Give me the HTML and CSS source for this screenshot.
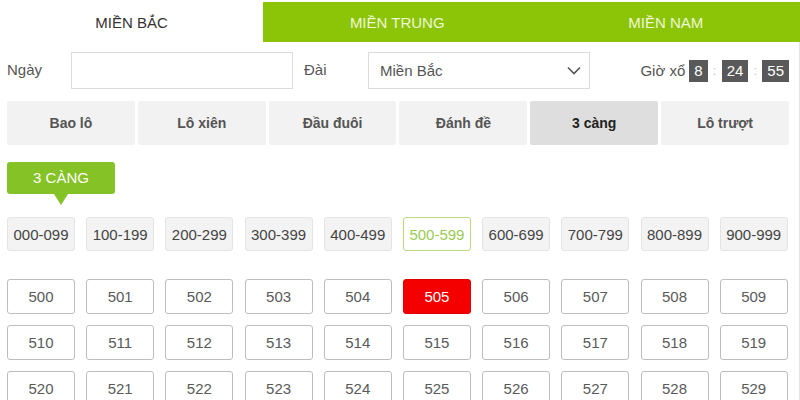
FILE: index.html
```html
<!DOCTYPE html>
<html lang="vi">
<head>
  <meta charset="UTF-8">
  <meta name="viewport" content="width=device-width, initial-scale=1.0">
  <title>3 Càng</title>
  <link rel="stylesheet" href="styles.css">
</head>
<body>
  <div class="tabs">
    <div class="tab active">MIỀN BẮC</div>
    <div class="tab">MIỀN TRUNG</div>
    <div class="tab">MIỀN NAM</div>
  </div>

  <div class="panel">
    <div class="filters">
      <label class="lbl">Ngày</label>
      <input class="field date" type="text">
      <label class="lbl dai">Đài</label>
      <div class="field select">
        <span>Miền Bắc</span>
        <svg width="14" height="9" viewBox="0 0 14 9"><path d="M1 1.5 L7 7.5 L13 1.5" fill="none" stroke="#555" stroke-width="1.6"/></svg>
      </div>
      <div class="clock">
        <span class="clock-lbl">Giờ xổ</span>
        <span class="digit">8</span><span class="sep">:</span>
        <span class="digit">24</span><span class="sep">:</span>
        <span class="digit">55</span>
      </div>
    </div>

    <div class="types">
      <button class="type">Bao lô</button>
      <button class="type">Lô xiên</button>
      <button class="type">Đầu đuôi</button>
      <button class="type">Đánh đề</button>
      <button class="type active">3 càng</button>
      <button class="type">Lô trượt</button>
    </div>

    <div class="badge">3 CÀNG</div>

    <div class="ranges">
      <button class="range">000-099</button>
      <button class="range">100-199</button>
      <button class="range">200-299</button>
      <button class="range">300-399</button>
      <button class="range">400-499</button>
      <button class="range active">500-599</button>
      <button class="range">600-699</button>
      <button class="range">700-799</button>
      <button class="range">800-899</button>
      <button class="range">900-999</button>
    </div>

    <div class="numbers" id="numbers"></div>
  </div>

  <script>
    const numbers = document.getElementById("numbers");
    for (let i = 500; i < 530; i++) {
      const btn = document.createElement("button");
      btn.className = "num" + (i === 505 ? " picked" : "");
      btn.textContent = i;
      numbers.appendChild(btn);
    }
  </script>
</body>
</html>
```

FILE: styles.css
```css
body {
  margin: 0;
  font-family: "Liberation Sans", Arial, sans-serif;
  color: #444;
  background: #fff;
  width: 800px;
  height: 400px;
  overflow: hidden;
}
.tabs {
  display: flex;
  margin-top: 2px;
  height: 40px;
}
.tab {
  flex: 1;
  display: flex;
  align-items: center;
  justify-content: center;
  background: #8cc408;
  color: #eef7d6;
  font-size: 15px;
}
.tab.active {
  flex: 0 0 263px;
  background: #fff;
  color: #333;
}
.panel {
  box-sizing: border-box;
  border-right: 1px solid #e4e4e4;
  padding: 10px 10px 0 7px;
  height: 358px;
  overflow: hidden;
}
.filters {
  display: flex;
  align-items: center;
  height: 37px;
}
.lbl {
  font-size: 15px;
  color: #555;
  width: 64px;
  margin-top: -2px;
}
.lbl.dai {
  width: 64px;
  margin-left: 11px;
}
.field {
  box-sizing: border-box;
  height: 37px;
  border: 1px solid #dcdcdc;
  background: #fff;
}
.date {
  width: 222px;
}
.select {
  width: 222px;
  display: flex;
  align-items: center;
  justify-content: space-between;
  padding: 0 8px 0 11px;
  font-size: 15px;
  color: #555;
}
.clock {
  margin-left: auto;
  display: flex;
  align-items: center;
  font-size: 15px;
  color: #555;
}
.clock-lbl {
  margin-right: 4px;
}
.digit {
  background: #595959;
  color: #fff;
  height: 22px;
  line-height: 22px;
  padding: 0 5px;
  font-size: 15px;
}
.sep {
  color: #c4c4c4;
  font-size: 13px;
  width: 14px;
  text-align: center;
}
.types {
  display: flex;
  gap: 3px;
  margin-top: 12px;
}
.type {
  flex: 1;
  height: 44px;
  border: none;
  border-radius: 2px;
  background: #f2f2f2;
  font-family: inherit;
  font-size: 14px;
  font-weight: bold;
  color: #555;
}
.type.active {
  background: #dedede;
  color: #222;
}
.badge {
  position: relative;
  width: 108px;
  height: 32px;
  line-height: 32px;
  margin-top: 17px;
  text-align: center;
  background: #84c225;
  color: #fff;
  font-size: 15px;
  border-radius: 3px;
}
.badge::after {
  content: "";
  position: absolute;
  left: 47px;
  top: 32px;
  border-left: 7px solid transparent;
  border-right: 7px solid transparent;
  border-top: 11px solid #84c225;
}
.ranges,
.numbers {
  display: grid;
  grid-template-columns: repeat(10, 68px);
  column-gap: 11.2px;
}
.ranges {
  margin-top: 23px;
}
.range {
  height: 34px;
  padding: 0;
  border: 1px solid #e4e4e4;
  border-radius: 3px;
  background: #f3f3f3;
  font-family: inherit;
  font-size: 15px;
  color: #444;
}
.range.active {
  background: #fff;
  border-color: #b9d97e;
  color: #9acb52;
}
.numbers {
  margin-top: 28px;
  row-gap: 11px;
}
.num {
  height: 35px;
  padding: 0;
  border: 1px solid #bdbdbd;
  border-radius: 3px;
  background: #fff;
  font-family: inherit;
  font-size: 15px;
  color: #5a5a5a;
}
.num.picked {
  background: #f40000;
  border-color: #e00000;
  color: #fff;
}
```
